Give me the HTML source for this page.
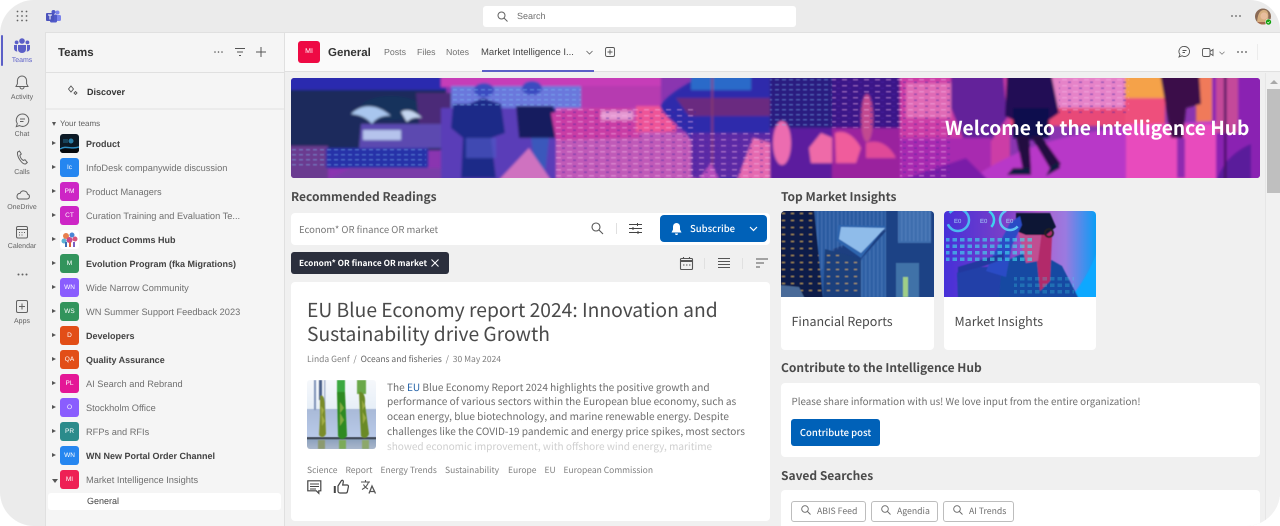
<!DOCTYPE html>
<html><head><meta charset="utf-8"><title>Teams</title>
<style>
*{box-sizing:border-box}
html,body{margin:0;padding:0;width:1280px;height:526px;overflow:hidden;background:#fff}
#app{position:absolute;left:0;top:0;width:1280px;height:526px;overflow:hidden;background:#ebebeb;border-radius:34px 30px 34px 34px;font-family:"Liberation Sans",sans-serif;color:#424242;text-rendering:geometricPrecision}
.a{position:absolute;white-space:nowrap}
.n{font-family:"Noto Sans CJK JP","Liberation Sans",sans-serif}
svg{position:absolute;overflow:visible}
.rail{font-size:7px;color:#616161;text-align:center;width:44px;left:0}
.t{left:86px;font-size:9.25px;line-height:14px;color:#707070;margin-top:.5px}
.t.b{font-weight:700;font-size:9px;color:#424242}
.ic{left:60px;width:19px;height:19px;border-radius:3px;color:#fff;font-size:6.5px;line-height:19px;text-align:center;opacity:.9;margin-top:-1px}
.ar{left:52px;width:0;height:0;border-left:4px solid #555;border-top:2.5px solid transparent;border-bottom:2.5px solid transparent}
.h{font-family:"Noto Sans CJK JP",sans-serif;font-weight:700;font-size:12px;line-height:18px;color:#4a4a4a;margin-top:1px}
.card{background:#fff;border-radius:4px}
.body{font-family:"Noto Sans CJK JP",sans-serif;font-size:10.05px;line-height:14.75px;color:#6e6e6e}
.tag{font-family:"Noto Sans CJK JP",sans-serif;font-size:8.5px;line-height:13px;color:#808080}
.sb{height:21px;top:501px;border:1px solid #bdbdbd;border-radius:3px;background:#fff}
</style></head><body>
<div id="app">

<!-- top bar -->
<svg style="left:16px;top:10px" width="12" height="12" fill="#616161"><circle cx="1.5" cy="1.5" r=".9"/><circle cx="6" cy="1.5" r=".9"/><circle cx="10.5" cy="1.5" r=".9"/><circle cx="1.5" cy="6" r=".9"/><circle cx="6" cy="6" r=".9"/><circle cx="10.5" cy="6" r=".9"/><circle cx="1.5" cy="10.5" r=".9"/><circle cx="6" cy="10.5" r=".9"/><circle cx="10.5" cy="10.5" r=".9"/></svg>
<svg style="left:46px;top:10px" width="15" height="13"><circle cx="11.5" cy="2.5" r="2" fill="#7b83eb"/><circle cx="7.5" cy="2" r="2" fill="#5059c9"/><rect x="8" y="5" width="7" height="6" rx="1.5" fill="#7b83eb"/><rect x="4" y="4.5" width="7" height="8" rx="1.2" fill="#5059c9"/><rect x="0" y="3" width="8" height="8" rx="1" fill="#4b53bc"/><path d="M2 5h4M4 5v4.5" stroke="#fff" stroke-width="1"/></svg>
<div class="a" style="left:483px;top:6px;width:313px;height:21px;background:#fff;border-radius:3px"></div>
<svg style="left:497px;top:11px" width="11" height="11" fill="none" stroke="#616161"><circle cx="4.5" cy="4.5" r="3.5"/><path d="M7 7l3.500 3.500"/></svg>
<div class="a" style="left:517px;top:10px;font-size:9px;line-height:12px;color:#707070">Search</div>
<svg style="left:1231px;top:15px" width="10" height="3" fill="#616161"><circle cx="1" cy="1" r=".9"/><circle cx="5" cy="1" r=".9"/><circle cx="9" cy="1" r=".9"/></svg>
<svg style="left:1255px;top:8px" width="17" height="18"><defs><clipPath id="av"><circle cx="8" cy="8.500" r="8"/></clipPath></defs><g clip-path="url(#av)"><rect width="17" height="18" fill="#8a6a55"/><path d="M2 18C2 6 5 2 9 2s5 4 4 9l3 7z" fill="#d6ae80"/><circle cx="9" cy="8" r="3.600" fill="#e8bd9d"/><rect x="1" y="14" width="15" height="4" fill="#a46a50"/></g><circle cx="13.500" cy="14" r="3" fill="#13a10e" stroke="#ebebeb" stroke-width=".6"/><path d="M12.300 14l1 1 1.400-1.600" stroke="#fff" stroke-width=".6" fill="none"/></svg>

<!-- left rail -->
<div class="a" style="left:1px;top:35px;width:2px;height:31px;background:#5b5fc7;border-radius:1px"></div>
<svg style="left:14px;top:38px" width="16" height="15" fill="#5b5fc7"><circle cx="8" cy="3" r="2.800"/><circle cx="2.600" cy="4.400" r="1.900"/><circle cx="13.400" cy="4.400" r="1.900"/><path d="M4 7h8v4.500a4 3.500 0 0 1-8 0z"/><path d="M0 7h3v4.500c0 .8.100 1.300.4 2A3 3 0 0 1 0 10.800zM16 7h-3v4.500c0 .8-.1 1.300-.4 2A3 3 0 0 0 16 10.800z"/></svg>
<div class="a rail" style="top:56px;color:#5b5fc7;line-height:9px">Teams</div>
<svg style="left:15px;top:75px" width="14" height="15" fill="none" stroke="#616161" stroke-width="1"><path d="M7 1a4.600 4.600 0 0 0-4.600 4.600v3.200L1 11.500h12l-1.400-2.700V5.600A4.600 4.600 0 0 0 7 1z"/><path d="M5 12a2 2 0 0 0 4 0"/></svg>
<div class="a rail" style="top:93px;line-height:9px">Activity</div>
<svg style="left:15px;top:113px" width="14" height="15" fill="none" stroke="#616161" stroke-width="1"><path d="M7.500 1a6.200 6.200 0 1 1-3 11.600L1.300 13.600l1-3A6.200 6.200 0 0 1 7.500 1z"/><path d="M5 6h5M5 8.500h3.500"/></svg>
<div class="a rail" style="top:130px;line-height:9px">Chat</div>
<svg style="left:16px;top:150px" width="13" height="15" fill="none" stroke="#616161" stroke-width="1"><path d="M1.500 2.200 3.500 1l1.800 3-1.400 1.300c.3 2 1.800 4.300 3.500 5.200l1.600-.8 2.300 2.700-1.600 1.500C6.500 15 .8 7 1.500 2.200z"/></svg>
<div class="a rail" style="top:168px;line-height:9px">Calls</div>
<svg style="left:15px;top:190px" width="15" height="10" fill="none" stroke="#616161" stroke-width="1"><path d="M3.500 9h8.500a2.500 2.500 0 0 0 .6-4.900A4 4 0 0 0 5 3.400 3 3 0 0 0 3.500 9z"/></svg>
<div class="a rail" style="top:203px;line-height:9px">OneDrive</div>
<svg style="left:16px;top:226px" width="12" height="13" fill="none" stroke="#616161" stroke-width="1"><rect x=".5" y=".5" width="11" height="11.500" rx="1.500"/><path d="M.5 3.500h11"/><path d="M3 6.500h1M5.500 6.500h1M8 6.500h1M3 9h1M5.500 9h1" stroke-width="1"/></svg>
<div class="a rail" style="top:242px;line-height:9px">Calendar</div>
<svg style="left:17px;top:273px" width="11" height="3" fill="#616161"><circle cx="1.500" cy="1.500" r="1"/><circle cx="5.500" cy="1.500" r="1"/><circle cx="9.500" cy="1.500" r="1"/></svg>
<svg style="left:16px;top:300px" width="12" height="13" fill="none" stroke="#616161" stroke-width="1"><rect x=".5" y=".5" width="11" height="12" rx="1.500"/><path d="M6 3.500v6M3 6.500h6"/></svg>
<div class="a rail" style="top:317px;line-height:9px">Apps</div>

<!-- teams pane -->
<div class="a" style="left:45px;top:32px;width:240px;height:494px;background:#f5f5f5;border-left:1px solid #e0e0e0;border-top:1px solid #e0e0e0;border-right:1px solid #e0e0e0"></div>
<div class="a" style="left:58px;top:45px;font-size:11.500px;font-weight:700;line-height:16px;color:#333">Teams</div>
<svg style="left:214px;top:51px" width="10" height="3" fill="#555"><circle cx="1" cy="1" r=".8"/><circle cx="4.500" cy="1" r=".8"/><circle cx="8" cy="1" r=".8"/></svg>
<svg style="left:235px;top:48px" width="10" height="8" stroke="#555" fill="none"><path d="M0 .5h10M2 4h6M4 7.500h2"/></svg>
<svg style="left:256px;top:47px" width="10" height="10" stroke="#555" fill="none"><path d="M5 0v10M0 5h10"/></svg>
<div class="a" style="left:46px;top:72px;width:238px;height:1px;background:#e0e0e0"></div>
<svg style="left:67px;top:85px" width="11" height="11" fill="none" stroke="#555" stroke-width=".9"><path d="M4 1l2.500 3L4 7 1.500 4zM8.500 6.500l1.500 1.500-1.500 1.500L7 8z"/></svg>
<div class="a" style="left:87px;top:84.500px;font-size:9px;font-weight:700;line-height:14px;color:#333">Discover</div>
<div class="a" style="left:46px;top:108px;width:238px;height:2px;background:#ebebeb"></div>
<div class="a" style="left:52px;top:122px;width:0;height:0;border-top:4px solid #555;border-left:2.500px solid transparent;border-right:2.500px solid transparent"></div>
<div class="a" style="left:60px;top:118px;font-size:8px;line-height:12px;color:#616161">Your teams</div>

<div class="a ar" style="top:141px"></div>
<svg style="left:60px;top:134px;border-radius:3px;overflow:hidden" width="19" height="19"><rect width="19" height="19" fill="#0c1a26"/><rect y="13" width="19" height="6" fill="#06080c"/><path d="M0 15C6 11 12 16 19 13" stroke="#2f8fc4" stroke-width="1.500" fill="none"/><circle cx="11" cy="7" r="2.500" fill="#2a7ea8"/><rect x="3" y="5" width="5" height="4" fill="#17425a"/></svg>
<div class="a t b" style="top:136.500px">Product</div>

<div class="a ar" style="top:165px"></div><div class="a ic" style="top:159px;background:#0f7bf0">Ic</div>
<div class="a t" style="top:160.500px">InfoDesk companywide discussion</div>
<div class="a ar" style="top:189px"></div><div class="a ic" style="top:183px;background:#c90fc0">PM</div>
<div class="a t" style="top:184.500px">Product Managers</div>
<div class="a ar" style="top:213px"></div><div class="a ic" style="top:207px;background:#c90fc0">CT</div>
<div class="a t" style="top:208.500px">Curation Training and Evaluation Te...</div>
<div class="a ar" style="top:237px"></div>
<svg style="left:60px;top:230px" width="19" height="19"><rect width="19" height="19" rx="3" fill="#fff"/><circle cx="6" cy="6" r="3" fill="#e8804f"/><circle cx="12" cy="5" r="2.500" fill="#4b86d6"/><circle cx="15" cy="9" r="2.500" fill="#d8557b"/><circle cx="4" cy="11" r="2.500" fill="#5db3d6"/><circle cx="9.500" cy="10" r="3" fill="#c94a8c"/><rect x="5" y="12" width="2" height="5" fill="#3d6fb5"/><rect x="9" y="12" width="2" height="5" fill="#e0613a"/><rect x="13" y="12" width="2" height="5" fill="#7b5fc2"/></svg>
<div class="a t b" style="top:232.500px">Product Comms Hub</div>
<div class="a ar" style="top:261px"></div><div class="a ic" style="top:255px;background:#1e8a4c">M</div>
<div class="a t b" style="top:256.500px">Evolution Program (fka Migrations)</div>
<div class="a ar" style="top:285px"></div><div class="a ic" style="top:279px;background:#7f4dff">WN</div>
<div class="a t" style="top:280.500px">Wide Narrow Community</div>
<div class="a ar" style="top:309px"></div><div class="a ic" style="top:303px;background:#1e8a4c">WS</div>
<div class="a t" style="top:304.500px">WN Summer Support Feedback 2023</div>
<div class="a ar" style="top:333px"></div><div class="a ic" style="top:327px;background:#e03c00">D</div>
<div class="a t b" style="top:328.500px">Developers</div>
<div class="a ar" style="top:357px"></div><div class="a ic" style="top:351px;background:#e03c00">QA</div>
<div class="a t b" style="top:352.500px">Quality Assurance</div>
<div class="a ar" style="top:381px"></div><div class="a ic" style="top:375px;background:#e3008c">PL</div>
<div class="a t" style="top:376.500px">AI Search and Rebrand</div>
<div class="a ar" style="top:405px"></div><div class="a ic" style="top:399px;background:#7f4dff">O</div>
<div class="a t" style="top:400.500px">Stockholm Office</div>
<div class="a ar" style="top:429px"></div><div class="a ic" style="top:423px;background:#168080">PR</div>
<div class="a t" style="top:424.500px">RFPs and RFIs</div>
<div class="a ar" style="top:453px"></div><div class="a ic" style="top:447px;background:#0f7bf0">WN</div>
<div class="a t b" style="top:448.500px">WN New Portal Order Channel</div>
<div class="a" style="left:52px;top:479px;width:0;height:0;border-top:4px solid #555;border-left:3px solid transparent;border-right:3px solid transparent"></div>
<div class="a ic" style="top:471px;background:#ee0a44">MI</div>
<div class="a t" style="top:472.500px">Market Intelligence Insights</div>
<div class="a" style="left:48px;top:493px;width:233px;height:17px;background:#fff;border-radius:3px"></div>
<div class="a" style="left:87px;top:494px;font-size:9px;line-height:14px;color:#424242">General</div>

<!-- main -->
<div class="a" style="left:285px;top:32px;width:995px;height:494px;background:#f0f0f0;border-top:1px solid #e0e0e0"></div>
<div class="a" style="left:285px;top:33px;width:995px;height:39px;background:#fafafa;border-bottom:1px solid #e0e0e0"></div>
<div class="a" style="left:298px;top:41px;width:22px;height:22px;border-radius:3px;background:#ee0a44;color:#fff;font-size:7px;line-height:22px;text-align:center">MI</div>
<div class="a" style="left:328px;top:45px;font-size:11.500px;font-weight:700;line-height:16px;color:#333">General</div>
<div class="a" style="left:384px;top:46px;font-size:8.800px;line-height:13px;color:#707070">Posts</div>
<div class="a" style="left:417px;top:46px;font-size:8.800px;line-height:13px;color:#707070">Files</div>
<div class="a" style="left:446px;top:46px;font-size:8.800px;line-height:13px;color:#707070">Notes</div>
<div class="a" style="left:481px;top:46px;font-size:9.500px;line-height:13px;color:#424242">Market Intelligence I...</div>
<svg style="left:586px;top:50px" width="7" height="5" fill="none" stroke="#616161" stroke-width=".8"><path d="M.5 1l3 3 3-3"/></svg>
<svg style="left:605px;top:47px" width="10" height="10" fill="none" stroke="#555" stroke-width=".9"><rect x=".5" y=".5" width="9" height="9" rx="1.500"/><path d="M5 2.500v5M2.500 5h5"/></svg>
<div class="a" style="left:482px;top:70px;width:112px;height:2px;background:#5b5fc7"></div>
<svg style="left:1178px;top:46px" width="12" height="12" fill="none" stroke="#555" stroke-width=".9"><path d="M6.500.5a5 5 0 1 1-2.500 9.300L1 11l1-2.500A5 5 0 0 1 6.500.5z"/><path d="M4.500 4.500h4M4.500 6.500h2.500"/></svg>
<svg style="left:1202px;top:48px" width="12" height="9" fill="none" stroke="#555" stroke-width=".9"><rect x=".5" y=".5" width="7.500" height="8" rx="1.500"/><path d="M8 3.500l3-2v6l-3-2"/></svg>
<svg style="left:1219px;top:51px" width="6" height="4" fill="none" stroke="#777" stroke-width=".7"><path d="M.5.800l2.500 2.500L5.500.800"/></svg>
<svg style="left:1237px;top:51px" width="10" height="3" fill="#555"><circle cx="1" cy="1" r=".9"/><circle cx="5" cy="1" r=".9"/><circle cx="9" cy="1" r=".9"/></svg>
<div class="a" style="left:1257px;top:44px;width:1px;height:16px;background:#ececec"></div>

<!-- scrollbar -->
<div class="a" style="left:1265px;top:73px;width:15px;height:453px;background:#f1f1f1;border-left:1px solid #e6e6e6"></div>
<div class="a" style="left:1267px;top:89px;width:13px;height:104px;background:#bfbfbf"></div>
<div class="a" style="left:1270px;top:80px;width:0;height:0;border-bottom:4px solid #a8a8a8;border-left:4px solid transparent;border-right:4px solid transparent"></div>

<!-- banner -->
<svg style="left:291px;top:78px;border-radius:3px;overflow:hidden" width="969" height="100" viewBox="0 0 969 100">
<defs>
<pattern id="win" width="11" height="6" patternUnits="userSpaceOnUse"><rect x="1" y="1" width="5" height="1.500" fill="#f6b6e6" opacity=".45"/><rect x="7" y="3.500" width="3" height="1.500" fill="#4a1ea5" opacity=".45"/></pattern>
<pattern id="win2" width="7" height="5" patternUnits="userSpaceOnUse"><rect x="1" y="1" width="4" height="1.500" fill="#7fc0f5" opacity=".4"/></pattern>
<filter id="bl" x="-5%" y="-5%" width="110%" height="110%"><feGaussianBlur stdDeviation="1.300"/></filter>
<filter id="bl1"><feGaussianBlur stdDeviation=".5"/></filter>
</defs>
<rect width="969" height="100" fill="#8a35b0"/>
<g filter="url(#bl)">
<!-- top band + forest -->
<rect x="-5" y="-5" width="160" height="20" fill="#2b2aaf"/>
<rect x="-5" y="12" width="160" height="60" fill="#1a2a5c"/>
<ellipse cx="100" cy="30" rx="30" ry="12" fill="#16325c"/>
<path d="M125 15H170V65H130z" fill="#4c2a78"/>
<!-- lower left -->
<rect x="-5" y="68" width="42" height="40" fill="#6a3a90"/>
<rect x="35" y="70" width="102" height="20" fill="#2630a8"/>
<path d="M30 105L60 90H170V105z" fill="#7a3ea8"/>
<!-- domes -->
<path d="M60 36C70 26 85 25 100 38 92 37 85 40 81 46 76 40 70 37 60 36z" fill="#a9c6ee"/>
<path d="M110 34C116 30 124 33 131 40 122 38 118 42 116 44z" fill="#c5d6f0"/>
<path d="M70 46H150L160 70H68z" fill="#5b48b0"/><rect x="72" y="52" width="38" height="10" fill="#b5c3ec"/>
<!-- central left building -->
<rect x="150" y="-5" width="220" height="14" fill="#c63eb8"/>
<rect x="160" y="8" width="130" height="22" fill="#6a78dc"/>
<rect x="150" y="30" width="125" height="75" fill="#5a3cb8"/>
<rect x="290" y="8" width="80" height="25" fill="#b63bb0"/>
<!-- people -->
<path d="M162 26H178L192 20 210 26 214 55 200 60 205 100H170L172 60 160 50z" fill="#1e2a88"/>
<path d="M225 28H262L268 45 264 60H228z" fill="#151a5e"/>
<path d="M240 60H258L254 96H245z" fill="#3a58bb"/>
<ellipse cx="193" cy="12" rx="10" ry="7" fill="#3a4cc0"/><ellipse cx="241" cy="10" rx="10" ry="7" fill="#3a4cc0"/>
<path d="M205 105L238 70 262 105z" fill="#cf72c0"/>
<path d="M175 60H205V80H175z" fill="#4d58c4" opacity=".7"/>
<!-- pink town -->
<rect x="265" y="30" width="110" height="75" fill="#c44bb2"/><rect x="265" y="55" width="140" height="50" fill="#c05ab8"/>
<path d="M260 35L300 30H340L350 60 265 62z" fill="#c93ea5"/>
<rect x="345" y="28" width="40" height="26" fill="#ee5498"/>
<rect x="310" y="33" width="32" height="9" fill="#e59ad2"/>
<!-- head silhouette -->
<path d="M369 28C378 15 395 6 417 -5H480V105H408C408 80 402 60 390 50 380 43 372 36 369 28z" fill="#2e2cab"/>
<path d="M385 20H480V38H398z" fill="#6a2a80"/>
<path d="M400 -5H460V12H400z" fill="#2a6bc9"/>
<rect x="400" y="55" width="80" height="45" fill="#5b2ba5"/>
<rect x="420.500" y="-5" width="1.500" height="110" fill="#8a3b6e"/>
<path d="M445 105L462 60 480 65V105z" fill="#e56ab0"/>
<path d="M405 105L420 85 430 105z" fill="#b74fbc"/>
<!-- dark panels -->
<rect x="479" y="-5" width="62" height="60" fill="#2a1a80"/>
<rect x="479" y="50" width="62" height="55" fill="#5c1e9e"/>
<ellipse cx="491" cy="65" rx="9" ry="22" fill="#ec6cb0"/>
<path d="M518 70 530 55 542 60V85H520z" fill="#ef6aa8"/>
<rect x="541" y="-5" width="70" height="55" fill="#3a1488"/>
<rect x="541" y="50" width="70" height="55" fill="#9a209e"/>
<path d="M544 55C556 50 566 62 570 70L565 85H545z" fill="#f05c9c"/>
<ellipse cx="576" cy="40" rx="6" ry="24" fill="#c24a90"/>
<path d="M575 65C590 60 600 70 605 80H575z" fill="#e04898"/>
<!-- mid magenta -->
<rect x="609" y="-5" width="110" height="110" fill="#cc3da6"/>
<path d="M660 -5H712L716 40 695 70 672 60 660 30z" fill="#64229a"/>
<path d="M609 60H700V105H609z" fill="#a82ab0"/>
<path d="M615 5H660V40H615z" fill="#e06ab5"/>
<!-- right city -->
<rect x="719" y="-5" width="120" height="40" fill="#e683c8"/>
<rect x="719" y="30" width="120" height="18" fill="#e84a78"/>
<rect x="834" y="-5" width="40" height="30" fill="#f5a24a"/>
<rect x="834" y="20" width="40" height="28" fill="#ee4f7c"/>
<rect x="905" y="-5" width="20" height="50" fill="#f07a5a"/>
<rect x="921" y="-5" width="55" height="110" fill="#8a20b2"/>
<rect x="925" y="-5" width="22" height="60" fill="#c44a9a"/>
<!-- floor -->
<path d="M675 105C735 60 800 48 925 43V105z" fill="#b838c8"/>
<path d="M835 46H925V105H835z" fill="#e84cbd"/>
<path d="M925 105C930 85 945 72 960 66V105z" fill="#5a1f9b"/>
<path d="M600 105L675 80 700 105z" fill="#7a1ca8"/>
<!-- walkers -->
<path d="M716 -5H760L768 35 758 42 748 62 735 62 722 42 714 38z" fill="#221155"/>
<path d="M722 30H758V60H722z" fill="#0e0a4e"/>
<path d="M725 58H738L740 92 732 92zM740 58H750L770 86 760 92z" fill="#22103f"/>
<path d="M722 90H740V97H716zM760 88l8-4 1 6-14 8z" fill="#0e1a40"/>
<path d="M869 -5H908L910 26 895 30 892 60H880L875 30z" fill="#3a1048"/>
<rect x="886" y="60" width="8" height="40" fill="#8e2ab0"/>
<rect x="933" y="-5" width="2.500" height="110" fill="#43115e"/>
</g>
<!-- fine window texture -->
<g filter="url(#bl1)">
<rect x="0" y="70" width="135" height="20" fill="url(#win2)"/>
<rect x="160" y="8" width="130" height="22" fill="url(#win2)"/>
<rect x="265" y="30" width="140" height="70" fill="url(#win)"/>
<rect x="400" y="55" width="80" height="45" fill="url(#win)"/>
<rect x="479" y="0" width="62" height="50" fill="url(#win2)"/>
<rect x="541" y="0" width="70" height="50" fill="url(#win)"/>
<rect x="609" y="0" width="50" height="100" fill="url(#win)"/>
<rect x="768" y="0" width="70" height="36" fill="url(#win)"/>
</g>
<text x="654" y="57" font-family="Noto Sans CJK JP,sans-serif" font-weight="700" font-size="19.200" fill="#fff">Welcome to the Intelligence Hub</text>
</svg>

<!-- recommended -->
<div class="a h" style="left:291px;top:187px">Recommended Readings</div>
<div class="a card" style="left:291px;top:213px;width:479px;height:32px"></div>
<div class="a n" style="left:299px;top:222px;font-size:9.500px;line-height:14px;color:#777">Econom* OR finance OR market</div>
<svg style="left:591px;top:222px" width="13" height="13" fill="none" stroke="#555" stroke-width="1.100"><circle cx="5" cy="5" r="4"/><path d="M8 8l4 4"/></svg>
<div class="a" style="left:616px;top:223px;width:1px;height:11px;background:#e0e0e0"></div>
<svg style="left:629px;top:223px" width="13" height="11" fill="none" stroke="#444" stroke-width="1"><path d="M0 1.500h13M0 5.500h13M0 9.500h13"/><path d="M8.500 0v3M4 4v3M9 8v3"/></svg>
<div class="a" style="left:660px;top:215px;width:107px;height:27px;background:#0061b8;border-radius:4px"></div>
<svg style="left:671px;top:223px" width="11" height="12" fill="#fff"><path d="M5.500 0a3.500 3.500 0 0 0-3.500 3.500v3L.5 9.500h10L9 6.500v-3A3.500 3.500 0 0 0 5.500 0zM4 10.500h3a1.500 1.500 0 0 1-3 0z"/></svg>
<div class="a n" style="left:690px;top:221px;font-size:9.500px;font-weight:500;line-height:15px;color:#fff">Subscribe</div>
<svg style="left:749px;top:226px" width="9" height="6" fill="none" stroke="#fff" stroke-width="1.200"><path d="M1 1l3.500 3.500L8 1"/></svg>
<div class="a" style="left:291px;top:252px;width:158px;height:22px;background:#2b2f3d;border-radius:3px"></div>
<div class="a n" style="left:299px;top:256px;font-size:8.300px;font-weight:700;line-height:14px;color:#fff">Econom* OR finance OR market</div>
<svg style="left:431px;top:259px" width="8" height="8" stroke="#fff" stroke-width="1"><path d="M.5.5l7 7M7.500.5l-7 7" fill="none"/></svg>
<svg style="left:680px;top:257px" width="13" height="13" fill="none" stroke="#555" stroke-width="1.100"><rect x=".5" y="1.500" width="12" height="11" rx="1"/><path d="M0 4h13" stroke-width="2"/><path d="M3.500 0v2M9.500 0v2M3 8h1.500M6 8h1.500M9 8h1.500"/></svg>
<div class="a" style="left:704px;top:258px;width:1px;height:11px;background:#e0e0e0"></div>
<svg style="left:718px;top:258px" width="12" height="10" stroke="#555" fill="none"><path d="M0 .5h12M0 3.500h12M0 6.500h12M0 9.500h12"/></svg>
<div class="a" style="left:742px;top:258px;width:1px;height:11px;background:#e0e0e0"></div>
<svg style="left:756px;top:258px" width="12" height="10" stroke="#555" fill="none"><path d="M0 1h12M0 5h8M0 9h4"/></svg>

<!-- article -->
<div class="a card" style="left:291px;top:282px;width:479px;height:239px"></div>
<div class="a n" style="left:307px;top:297px;font-size:19.250px;line-height:24px;color:#4a4a4a">EU Blue Economy report 2024: Innovation and<br>Sustainability drive Growth</div>
<div class="a n" style="left:307px;top:353px;font-size:8.500px;line-height:13px;color:#808080">Linda Genf&nbsp; /&nbsp; <span style="color:#666">Oceans and fisheries</span>&nbsp; /&nbsp; 30 May 2024</div>

<svg style="left:307px;top:380px;border-radius:3px;overflow:hidden" width="69" height="69" viewBox="0 0 69 69">
<defs><linearGradient id="tb" x1="0" x2="0" y1="0" y2="1"><stop offset="0" stop-color="#f6f8fb"/><stop offset=".41" stop-color="#e7eff8"/><stop offset=".43" stop-color="#a9bad8"/><stop offset=".82" stop-color="#b8c9e8"/><stop offset=".84" stop-color="#262c36"/><stop offset=".87" stop-color="#8ea3be"/><stop offset="1" stop-color="#aab7cc"/></linearGradient><filter id="b2"><feGaussianBlur stdDeviation=".5"/></filter></defs>
<rect width="69" height="69" fill="url(#tb)"/>
<g filter="url(#b2)">
<rect x="7" y="0" width="2" height="30" fill="#7f93b8"/>
<rect x="12" y="0" width="3" height="20" fill="#4a5f88"/>
<rect x="17" y="0" width="1.500" height="30" fill="#a9b6d0"/>
<rect x="30" y="0" width="8" height="14" fill="#3aa83f"/>
<rect x="50" y="0" width="9" height="14" fill="#6aa848"/>
<path d="M13 16C16 14 18 18 18 26L19 54C17 58 14 58 12 55L13 36z" fill="#7a8c2c"/>
<path d="M30 12H38L40 56C37 60 33 60 31 56z" fill="#2f8a22"/>
<path d="M52 12C56 11 59 16 58 24L62 54C60 59 56 59 54 56L53 36z" fill="#6a8a28"/>
<path d="M14 26l3 4-2 5 3 6-3 5zM33 22l4 6-4 5 4 7-4 6zM55 20l3 6-3 5 4 7-3 6z" fill="#c3c95a" opacity=".55"/>
<rect x="11" y="60" width="7" height="9" fill="#8c9a70"/><rect x="32" y="60" width="7" height="9" fill="#7caa58"/><rect x="55" y="60" width="7" height="9" fill="#8da86c"/>
</g></svg>

<div class="a body" style="left:387px;top:379.500px">The <span style="color:#2563a8">EU</span> Blue Economy Report 2024 highlights the positive growth and<br>performance of various sectors within the European blue economy, such as<br>ocean energy, blue biotechnology, and marine renewable energy. Despite<br>challenges like the COVID-19 pandemic and energy price spikes, most sectors<br><span style="color:#cfcfcf">showed economic improvement, with offshore wind energy, maritime</span></div>

<div class="a tag" style="left:307px;top:464px">Science</div>
<div class="a tag" style="left:345.500px;top:464px">Report</div>
<div class="a tag" style="left:380.500px;top:464px">Energy Trends</div>
<div class="a tag" style="left:445px;top:464px">Sustainability</div>
<div class="a tag" style="left:508px;top:464px">Europe</div>
<div class="a tag" style="left:544.500px;top:464px">EU</div>
<div class="a tag" style="left:563.500px;top:464px">European Commission</div>
<svg style="left:307px;top:480px" width="15" height="14" fill="none" stroke="#444" stroke-width="1.200"><path d="M.8.800h13v10h-2v2.500l-2.500-2.500H.8z"/><path d="M3 4h9M3 6.500h9M3 9h6" stroke-width=".9"/></svg>
<svg style="left:334px;top:479px" width="15" height="15" fill="none" stroke="#444" stroke-width="1.200"><path d="M.8 7v7" stroke-width="2"/><path d="M4 7l3.500-5.500c1.500-.7 2 .5 1.800 1.500L8.700 6h4.500c1 0 1.400.8 1.200 1.700l-1 5c-.2.800-.7 1.300-1.500 1.300H6c-1 0-2-.8-2-2z"/></svg>
<svg style="left:361px;top:479px" width="15" height="15" fill="none" stroke="#555" stroke-width="1.100"><path d="M0 3h9M4.500 1v2M7.500 3C6.500 6.500 4 9 1 10.500M2.500 5.500c1 2 2.500 3.500 4.500 4.500"/><path d="M8 14.500l3-7.500 3.500 7.500M9 12.500h4.500" stroke-width="1.300"/></svg>

<!-- top insights -->
<div class="a h" style="left:781px;top:187px">Top Market Insights</div>
<div class="a card" style="left:781px;top:211px;width:153px;height:139px"></div>
<div class="a card" style="left:944px;top:211px;width:152px;height:139px"></div>
<svg style="left:781px;top:211px;border-radius:4px 4px 0 0;overflow:hidden" width="153" height="86" viewBox="0 0 153 86">
<defs><pattern id="yl" width="9" height="7" patternUnits="userSpaceOnUse"><rect x="1" y="2" width="3" height="1" fill="#e0bf5a" opacity=".75"/></pattern><pattern id="bl2" width="4" height="5" patternUnits="userSpaceOnUse"><rect width="1.500" height="5" fill="#8fbbf0" opacity=".18"/></pattern><filter id="b3"><feGaussianBlur stdDeviation=".5"/></filter></defs>
<rect width="153" height="86" fill="#1d3f80"/>
<g filter="url(#b3)">
<path d="M-2 -2H33L44 88H-2z" fill="#0f1d48"/><path d="M0 0H33L44 86H0z" fill="url(#yl)"/>
<path d="M33 -2H107V18L52 38 42 88z" fill="#2a5aa0"/><path d="M33 0H105V20L52 40 40 60z" fill="url(#bl2)"/>
<path d="M57 14L105 15 80 47 56 30z" fill="#2e65ae"/>
<path d="M60 16L104 17 80 42 58 28z" fill="#8fbcea"/>
<path d="M44 38L80 48V88H42z" fill="#1c3f7c"/><path d="M44 40L80 50V86H44z" fill="url(#yl)"/>
<path d="M80 48L105 20V88H80z" fill="#2f5fa4"/><path d="M80 50L105 20V86H80z" fill="url(#bl2)"/>
<path d="M105 -2H155V88H105z" fill="#1e4285"/><path d="M117 -2H150V32H117z" fill="#3e6dad"/><path d="M117 0H150V30H117z" fill="url(#bl2)"/>
<path d="M115 52H138V88H115z" fill="#3f72a8"/><rect x="122" y="66" width="5" height="20" fill="#9fce87"/>
<path d="M-2 74L18 76 24 88H-2z" fill="#4a6a98"/>
</g></svg>
<svg style="left:944px;top:211px;border-radius:4px 4px 0 0;overflow:hidden" width="152" height="86" viewBox="0 0 152 86">
<defs><linearGradient id="mi" x1="0" x2="1" y1="0" y2="0"><stop offset="0" stop-color="#4630d8"/><stop offset=".4" stop-color="#7a3fc8"/><stop offset=".62" stop-color="#b05ecc"/><stop offset=".8" stop-color="#9a7ae0"/><stop offset="1" stop-color="#0a9df5"/></linearGradient><pattern id="dt" width="7.500" height="6.500" patternUnits="userSpaceOnUse"><rect x="1" y="1" width="4.500" height="3.500" fill="#3fe3ee" opacity=".6"/></pattern><filter id="b4"><feGaussianBlur stdDeviation=".5"/></filter></defs>
<rect width="152" height="86" fill="url(#mi)"/>
<g filter="url(#b4)">
<path d="M126 88C140 70 148 55 154 38V88z" fill="#0aa8ff"/>
<path d="M14 88 13 62C25 50 45 62 60 50L62 88z" fill="#2340a8"/>
<path d="M55 88 58 52 88 38 118 55 135 88z" fill="#174aa2"/>
<path d="M88 10C100 5 108 12 108 25L106 70 96 80 92 40z" fill="#b22a6a"/>
<path d="M74 20H98L94 50 82 52z" fill="#c04f92"/>
<path d="M72 2H106L112 16 102 24H82L72 20z" fill="#0e1236"/>
<circle cx="105" cy="22" r="4" fill="none" stroke="#222" stroke-width="2"/>
<path d="M42 60C50 40 60 25 66 12L76 5 78 14 68 34 62 66z" fill="#2a4cc5"/>
<path d="M60 48L40 55 14 62V56L60 42z" fill="#24389f"/>
</g>
<rect x="2" y="24" width="88" height="28" fill="url(#dt)"/>
<circle cx="14" cy="9" r="11" fill="none" stroke="#4cb8f0" stroke-width="2.500" stroke-dasharray="30 12"/>
<circle cx="40" cy="9" r="10" fill="none" stroke="#3fd0ee" stroke-width="2.500" stroke-dasharray="18 45" transform="rotate(-60 40 9)"/>
<circle cx="66" cy="9" r="10" fill="none" stroke="#5ec4f3" stroke-width="2.500" stroke-dasharray="36 30" transform="rotate(40 66 9)"/>
<text x="10" y="12" font-family="Liberation Sans" font-size="6" fill="#a7d8fa">E0</text>
<text x="36" y="12" font-family="Liberation Sans" font-size="6" fill="#a7d8fa">E0</text>
<text x="62" y="12" font-family="Liberation Sans" font-size="6" fill="#a7d8fa">E0</text>
<rect x="70" y="65" width="60" height="18" fill="url(#dt)" opacity=".4"/>
</svg>
<div class="a n" style="left:791.500px;top:312px;font-size:12.500px;line-height:18px;color:#4a4a4a">Financial Reports</div>
<div class="a n" style="left:954.500px;top:312px;font-size:12.500px;line-height:18px;color:#4a4a4a">Market Insights</div>

<!-- contribute -->
<div class="a h" style="left:781px;top:358px">Contribute to the Intelligence Hub</div>
<div class="a card" style="left:781px;top:383px;width:479px;height:74px"></div>
<div class="a n" style="left:791.500px;top:394px;font-size:9.800px;line-height:14px;color:#707070">Please share information with us! We love input from the entire organization!</div>
<div class="a n" style="left:791px;top:419px;width:89px;height:27px;background:#0061b8;border-radius:3px;color:#fff;font-size:9.500px;font-weight:500;line-height:27px;text-align:center">Contribute post</div>

<!-- saved -->
<div class="a h" style="left:781px;top:466px">Saved Searches</div>
<div class="a card" style="left:781px;top:490px;width:479px;height:40px"></div>
<div class="a sb" style="left:791px;width:75px"></div>
<svg style="left:801px;top:505px" width="10" height="10" fill="none" stroke="#666" stroke-width=".9"><circle cx="4" cy="4" r="3.300"/><path d="M6.500 6.500l3 3"/></svg>
<div class="a n" style="left:817px;top:504px;font-size:8.700px;line-height:13px;color:#707070">ABIS Feed</div>
<div class="a sb" style="left:871px;width:67px"></div>
<svg style="left:881px;top:505px" width="10" height="10" fill="none" stroke="#666" stroke-width=".9"><circle cx="4" cy="4" r="3.300"/><path d="M6.500 6.500l3 3"/></svg>
<div class="a n" style="left:897px;top:504px;font-size:8.700px;line-height:13px;color:#707070">Agendia</div>
<div class="a sb" style="left:943px;width:71px"></div>
<svg style="left:953px;top:505px" width="10" height="10" fill="none" stroke="#666" stroke-width=".9"><circle cx="4" cy="4" r="3.300"/><path d="M6.500 6.500l3 3"/></svg>
<div class="a n" style="left:969px;top:504px;font-size:8.700px;line-height:13px;color:#707070">AI Trends</div>
</div>
</body></html>
